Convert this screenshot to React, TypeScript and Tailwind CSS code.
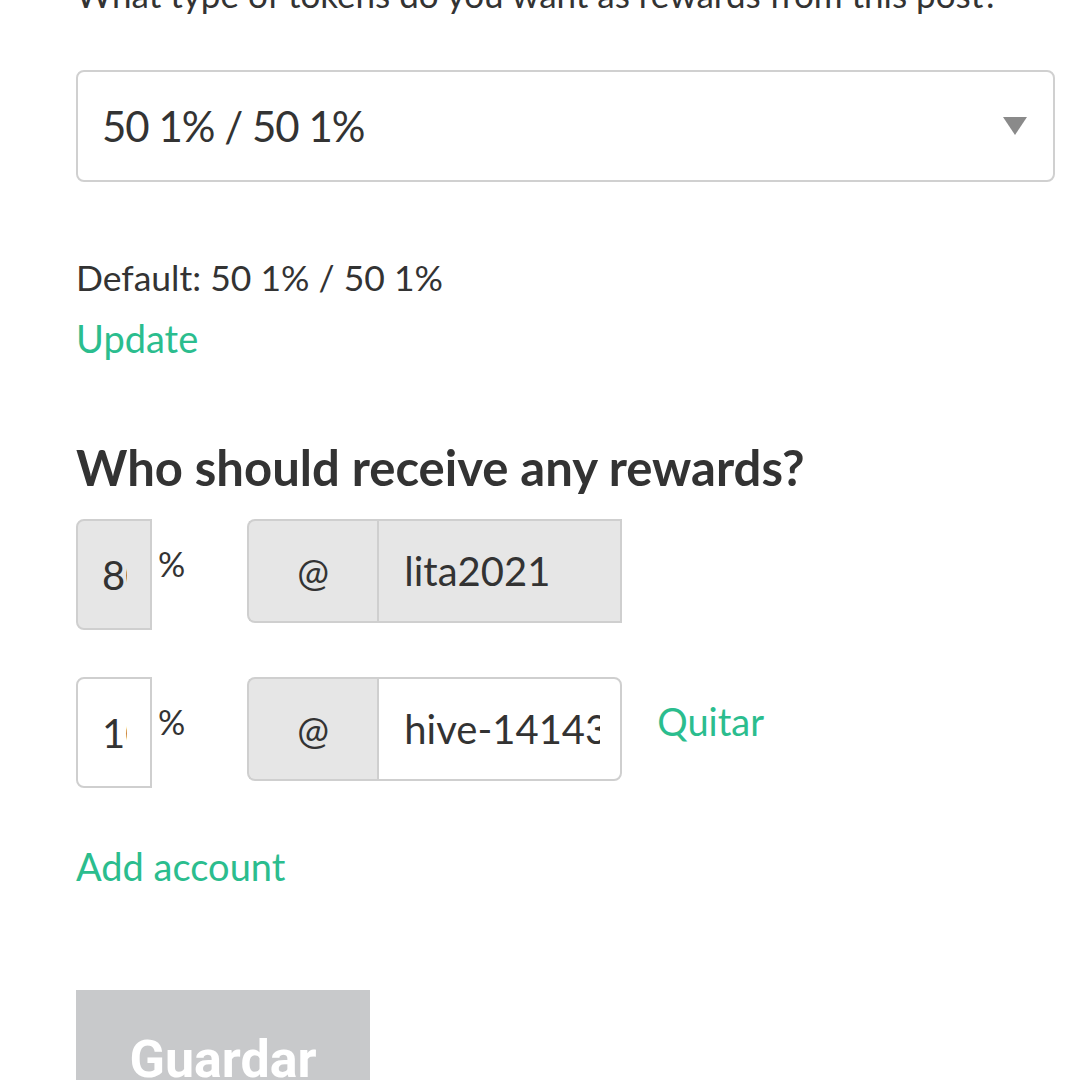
import React from "react";

const green = "text-[#2bbd8e]";

function PercentInput({ value, disabled }: { value: string; disabled?: boolean }) {
  return (
    <div className="flex items-start">
      <div
        className={`w-[76px] h-[111px] border-2 border-[#cfcfcf] rounded-l-[8px] flex items-center pl-[24px] overflow-hidden text-[40px] ${
          disabled ? "bg-[#e6e6e6]" : "bg-white"
        }`}
      >
        <span className="w-[25px] overflow-hidden whitespace-nowrap">{value}</span>
      </div>
      <span className="ml-[6px] mt-[28px] text-[34px] leading-none">%</span>
    </div>
  );
}

function AccountInput({ name, disabled }: { name: string; disabled?: boolean }) {
  return (
    <div className="flex h-[104px] w-[375px]">
      <div className="w-[130px] bg-[#e6e6e6] border-2 border-r-0 border-[#cfcfcf] rounded-l-[8px] flex items-center justify-center text-[38px]">
        @
      </div>
      <div
        className={`flex-1 border-2 border-[#cfcfcf] flex items-center pl-[25px] overflow-hidden ${
          disabled ? "bg-[#e6e6e6] rounded-r-none" : "bg-white rounded-r-[8px]"
        }`}
      >
        <span className="w-[196px] overflow-hidden whitespace-nowrap text-[40px]">{name}</span>
      </div>
    </div>
  );
}

export default function App() {
  return (
    <div
      className="w-[1080px] h-[1080px] overflow-hidden bg-white text-[#333333]"
      style={{ fontFamily: "Lato, 'Noto Sans', sans-serif" }}
    >
      <div className="px-[76px] -mt-[32px]">
        <p className="text-[35px] leading-[52px] whitespace-nowrap">
          What type of tokens do you want as rewards from this post?
        </p>

        <div className="mt-[50px] h-[112px] w-[979px] border-2 border-[#d0d0d0] rounded-[8px] flex items-center justify-between pl-[24px] pr-[26px]">
          <span className="text-[42px] tracking-[-1px]">50 1% / 50 1%</span>
          <svg width="24" height="18" viewBox="0 0 24 18">
            <path d="M0 0 L24 0 L12 18 Z" fill="#8a8a8a" />
          </svg>
        </div>

        <p className="mt-[74px] text-[35.5px] leading-[44px]">Default: 50 1% / 50 1%</p>
        <p className={`mt-[16px] text-[38px] leading-[44px] ${green}`}>Update</p>

        <h2 className="mt-[77px] text-[49px] font-bold leading-[60px]">
          Who should receive any rewards?
        </h2>

        <div className="mt-[22px] flex items-start">
          <PercentInput value="80" disabled />
          <div className="ml-[62px]">
            <AccountInput name="lita2021" disabled />
          </div>
        </div>

        <div className="mt-[47px] flex items-start">
          <PercentInput value="10" />
          <div className="ml-[62px]">
            <AccountInput name="hive-141439" />
          </div>
          <span className={`ml-[35px] mt-[22px] text-[38px] leading-[44px] ${green}`}>Quitar</span>
        </div>

        <p className={`mt-[56px] text-[38px] leading-[44px] ${green}`}>Add account</p>

        <button
          className="mt-[102px] w-[294px] h-[120px] bg-[#c8c9cb] text-white text-[52px] font-bold flex justify-center pt-[31px]"
          style={{ fontFamily: "Roboto, sans-serif" }}
        >
          Guardar
        </button>
      </div>
    </div>
  );
}
